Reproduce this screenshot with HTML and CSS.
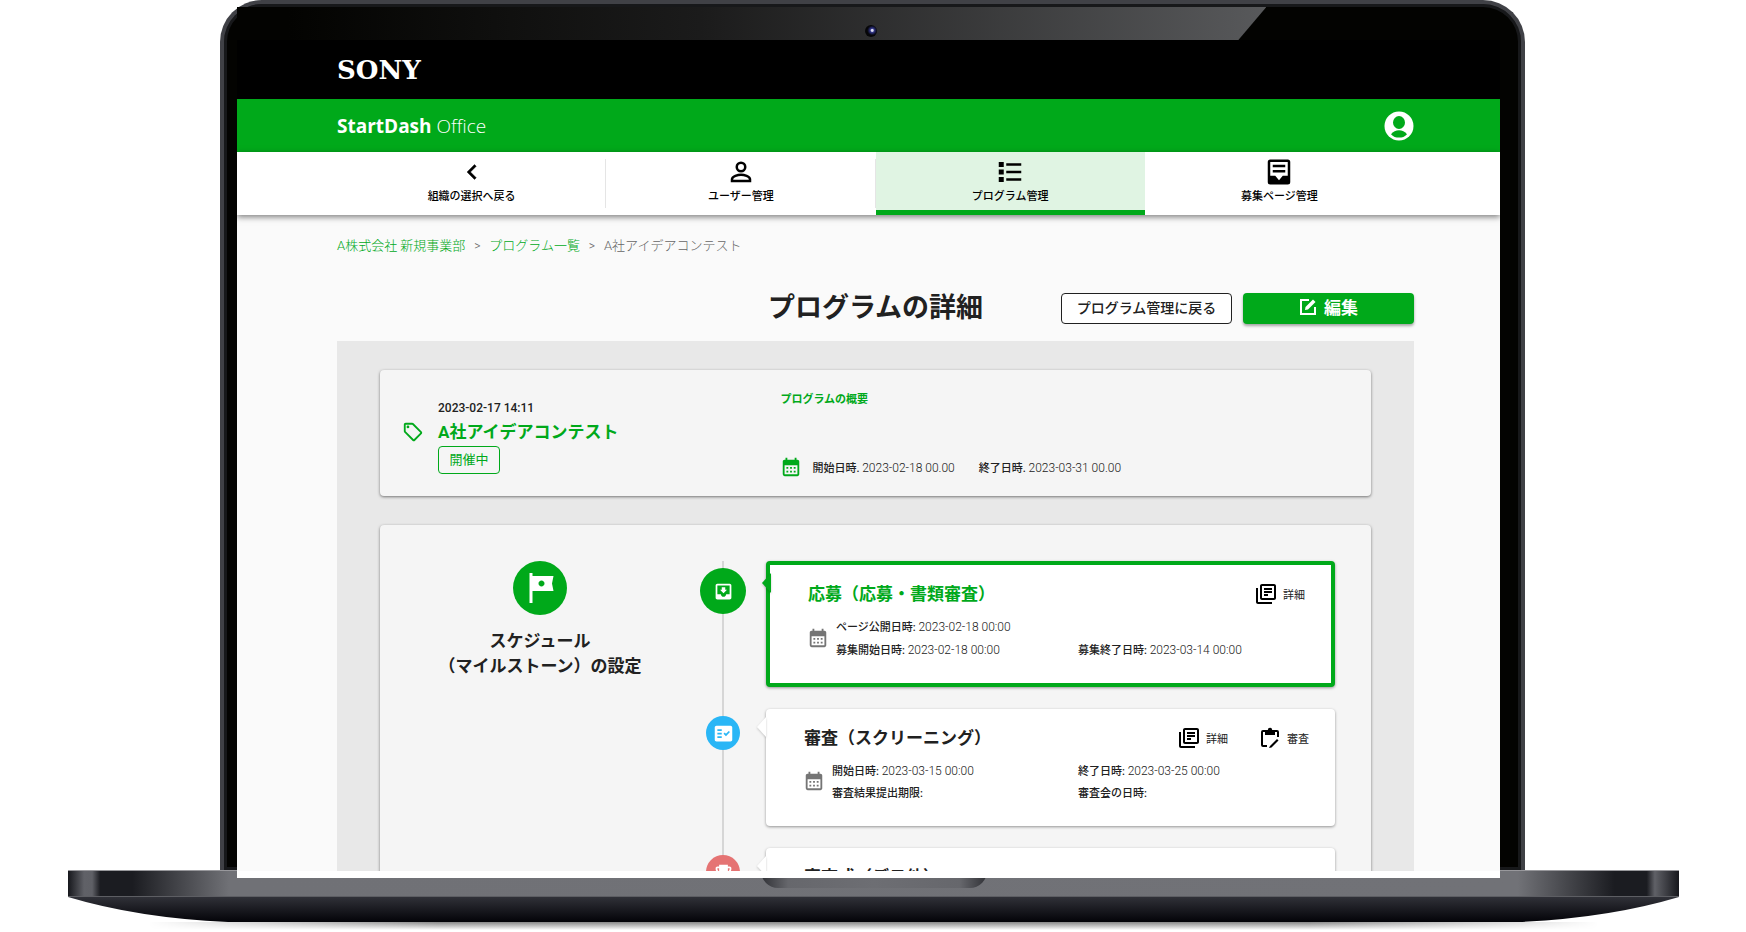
FILE: index.html
```html
<!DOCTYPE html>
<html lang="ja">
<head>
<meta charset="utf-8">
<meta name="viewport" content="width=device-width, initial-scale=1">
<title>プログラムの詳細</title>
<link rel="stylesheet" href="styles.css">
</head>
<body>
<svg class="defs" aria-hidden="true">
  <symbol id="i-books" viewBox="0 0 24 24"><path d="M4 6H2v14c0 1.1.9 2 2 2h14v-2H4V6zm16-4H8c-1.1 0-2 .9-2 2v12c0 1.1.9 2 2 2h12c1.1 0 2-.9 2-2V4c0-1.1-.9-2-2-2zm0 14H8V4h12v12zM10 9h8v2h-8zm0 3h4v2h-4zm0-6h8v2h-8z"/></symbol>
  <symbol id="i-cal" viewBox="0 0 24 24"><path d="M19 4h-1V2h-2v2H8V2H6v2H5c-1.11 0-1.99.9-1.99 2L3 20a2 2 0 0 0 2 2h14c1.1 0 2-.9 2-2V6c0-1.1-.9-2-2-2zm0 16H5V10h14v10zM9 14H7v-2h2v2zm4 0h-2v-2h2v2zm4 0h-2v-2h2v2zm-8 4H7v-2h2v2zm4 0h-2v-2h2v2zm4 0h-2v-2h2v2z"/></symbol>
</svg>
<div class="laptop">
  <div class="lid">
    <div class="bezel"><div class="sheen"></div><div class="camera"></div></div>
    <div class="screen">
      <div class="app">
        <div class="brand"><span class="sony">SONY</span></div>
        <header class="bar">
          <a class="product" href="#"><b>StartDash</b> Office</a>
          <button class="account" aria-label="アカウント">
            <svg viewBox="0 0 30 30"><circle cx="15" cy="15" r="14.5" fill="#fff"/><ellipse cx="15" cy="11.5" rx="6" ry="6.5" fill="#00a91a"/><path d="M7 23.2C9 20.4 12 19.2 15 19.2s6 1.200 8 4C21 25.700 18 26.600 15 26.600s-6-.9-8-3.400z" fill="#00a91a"/></svg>
          </button>
        </header>
        <nav class="tabs">
          <a class="tab" href="#"><svg viewBox="0 0 24 24"><path d="M15.410 7.410 14 6l-6 6 6 6 1.410-1.410L10.830 12z" stroke="#000" stroke-width=".3"/></svg><span>組織の選択へ戻る</span></a>
          <a class="tab" href="#"><svg viewBox="0 0 24 24"><g fill="none" stroke="#000" stroke-width="2"><circle cx="12" cy="8" r="3.400"/><path d="M4.800 19.200v-1.400c0-2.400 4.800-3.700 7.200-3.700s7.200 1.300 7.200 3.700v1.400z"/></g></svg><span>ユーザー管理</span></a>
          <a class="tab active" href="#" aria-current="page"><svg viewBox="0 0 24 24"><path d="M3 4h4v4H3zM3 10h4v4H3zM3 16h4v4H3zM9 5h12v2H9zM9 11h12v2H9zM9 17h12v2H9z"/></svg><span>プログラム管理</span></a>
          <a class="tab" href="#"><svg viewBox="0 0 24 24"><path fill-rule="evenodd" d="M5 2h14a2 2 0 0 1 2 2v16a2 2 0 0 1-2 2H5a2 2 0 0 1-2-2V4a2 2 0 0 1 2-2zm0 2v11h4l3 3.500 3-3.500h4V4zm2 2.200h10v1.900H7zm0 4.200h10v1.900H7z"/></svg><span>募集ページ管理</span></a>
        </nav>
        <main class="main">
          <div class="crumbs"><a href="#">A株式会社 新規事業部</a><i>&gt;</i><a href="#">プログラム一覧</a><i>&gt;</i><span>A社アイデアコンテスト</span></div>
          <div class="heading">
            <h1>プログラムの詳細</h1>
            <div class="heading-actions">
              <button class="btn">プログラム管理に戻る</button>
              <button class="btn primary"><svg viewBox="0 0 18 18"><path d="M10 2H2v14h14V9" fill="none" stroke="#fff" stroke-width="2"/><path d="m6 12 .5-3L14 1.500 16.500 4 9 11.500z" fill="#fff"/></svg>編集</button>
            </div>
          </div>
          <div class="panel">
            <section class="card summary">
              <div class="summary-id">
                <svg class="i22 green" viewBox="0 0 24 24"><path d="M21.410 11.410l-8.830-8.830c-.37-.37-.88-.58-1.410-.58H4c-1.100 0-2 .9-2 2v7.170c0 .53.21 1.040.59 1.410l8.830 8.830c.78.78 2.050.78 2.830 0l7.170-7.170c.78-.78.78-2.040-.01-2.830zM12.830 20L4 11.170V4h7.170L20 12.830 12.830 20z"/><circle cx="6.500" cy="6.500" r="1.500"/></svg>
                <div>
                  <time>2023-02-17 14:11</time>
                  <h2>A社アイデアコンテスト</h2>
                  <span class="chip">開催中</span>
                </div>
              </div>
              <div class="summary-info">
                <h3>プログラムの概要</h3>
                <div class="period"><svg class="i22 green"><use href="#i-cal"/></svg><span><b>開始日時.</b> <time>2023-02-18 00.00</time></span><span><b>終了日時.</b> <time>2023-03-31 00.00</time></span></div>
              </div>
            </section>
            <section class="card schedule">
              <div class="schedule-title">
                <div class="flag"><svg viewBox="0 0 24 24"><path d="M21 4H7V2H5v20h2v-8h14l-1-5 1-5zm-6 5c0 1.100-.9 2-2 2s-2-.9-2-2 .9-2 2-2 2 .9 2 2z"/></svg></div>
                <h2>スケジュール<br>（マイルストーン）の設定</h2>
              </div>
              <ol class="timeline">
                <li>
                  <div class="dot big"><svg viewBox="0 0 24 24"><path d="M19 3H4.990c-1.110 0-1.980.9-1.980 2L3 19c0 1.100.88 2 1.990 2H19c1.100 0 2-.9 2-2V5c0-1.100-.9-2-2-2zm0 12h-4c0 1.660-1.350 3-3 3s-3-1.340-3-3H4.990V5H19v10zm-3-5h-2V7h-4v3H8l4 4 4-4z"/></svg></div>
                  <article class="item current">
                    <div class="item-head"><h3>応募（応募・書類審査）</h3><button class="act"><svg><use href="#i-books"/></svg>詳細</button></div>
                    <div class="item-body">
                      <svg><use href="#i-cal"/></svg>
                      <p><b>ページ公開日時:</b> <time>2023-02-18 00:00</time></p><p></p>
                      <p><b>募集開始日時:</b> <time>2023-02-18 00:00</time></p><p><b>募集終了日時:</b> <time>2023-03-14 00:00</time></p>
                    </div>
                  </article>
                </li>
                <li>
                  <div class="dot blue"><svg viewBox="0 0 24 24"><path d="M20 3H4c-1.100 0-2 .9-2 2v14c0 1.100.9 2 2 2h16c1.100 0 2-.9 2-2V5c0-1.100-.9-2-2-2zM10 17H5v-2h5v2zm0-4H5v-2h5v2zm0-4H5V7h5v2zm4.820 6L12 12.160l1.410-1.410 1.410 1.420L17.990 9l1.420 1.420L14.820 15z"/></svg></div>
                  <article class="item">
                    <div class="item-head"><h3>審査（スクリーニング）</h3><button class="act"><svg><use href="#i-books"/></svg>詳細</button><button class="act"><svg viewBox="0 0 24 24"><path d="M9 21H5a2 2 0 0 1-2-2V6a2 2 0 0 1 2-2h14a2 2 0 0 1 2 2v5h-2V6h-2v3H7V6H5v13h4z"/><circle cx="12" cy="4" r="2.200"/><path d="m12 20 7-7 1.500 1.500-7 7-2.500.5z"/></svg>審査</button></div>
                    <div class="item-body">
                      <svg><use href="#i-cal"/></svg>
                      <p><b>開始日時:</b> <time>2023-03-15 00:00</time></p><p><b>終了日時:</b> <time>2023-03-25 00:00</time></p>
                      <p><b>審査結果提出期限:</b></p><p><b>審査会の日時:</b></p>
                    </div>
                  </article>
                </li>
                <li>
                  <div class="dot red"><svg viewBox="0 0 24 24"><path d="M19 5h-2V3H7v2H5c-1.100 0-2 .9-2 2v1c0 2.550 1.920 4.630 4.390 4.940.63 1.500 1.980 2.630 3.610 2.960V19H7v2h10v-2h-4v-3.100c1.630-.33 2.980-1.460 3.610-2.960C19.080 12.630 21 10.550 21 8V7c0-1.100-.9-2-2-2zM5 8V7h2v3.820C5.840 10.400 5 9.300 5 8zm14 0c0 1.300-.84 2.400-2 2.820V7h2v1z"/></svg></div>
                  <article class="item">
                    <div class="item-head"><h3>審査式（デモ他）</h3></div>
                  </article>
                </li>
              </ol>
            </section>
          </div>
        </main>
      </div>
    </div>
  </div>
  <div class="base">
    <div class="deck"><div class="notch"></div></div>
    <svg class="hull" viewBox="0 0 1611 25" preserveAspectRatio="none"><defs><linearGradient id="hull" x2="0" y2="1"><stop stop-color="#303138"/><stop offset="1" stop-color="#030308"/></linearGradient></defs><path fill="url(#hull)" d="M0 0Q70 21 160 25H1451Q1541 21 1611 0Z"/></svg>
    <div class="shadow"></div>
  </div>
</div>
</body>
</html>
```
FILE: styles.css
```css
* { box-sizing: border-box; }
body {
  margin: 0;
  background: #fff;
  color: #212121;
  font-family: Roboto, "Noto Sans CJK JP", sans-serif;
  font-size: 11px;
}
h1, h2, h3, p, ol { margin: 0; padding: 0; }
a { text-decoration: none; }
button { font: inherit; color: inherit; cursor: pointer; }
.defs { display: none; }
.green { fill: #00a91a; }
.i22 { width: 22px; height: 22px; flex: none; }

/* laptop */
.laptop { height: 100vh; display: flex; flex-direction: column; overflow: hidden; }
.lid {
  flex: 1;
  min-height: 0;
  display: flex;
  flex-direction: column;
  margin: 0 221px 0 220px;
  padding: 0 21px 0 13px;
  border: 4px solid #404146;
  border-bottom: 0;
  border-radius: 42px 42px 0 0;
  background: #030301;
  box-shadow: inset 0 0 0 3px #17181a;
  position: relative;
  z-index: 1;
}
.bezel { height: 36px; flex: none; position: relative; }
.sheen {
  height: 33px;
  margin: 3px 18.5% 0 0;
  background: linear-gradient(90deg, #030301 5%, #1b1b1b 45%, #58595b);
  clip-path: polygon(0 0, 100% 0, calc(100% - 28px) 100%, 0 100%);
}
.camera {
  position: absolute;
  left: calc(50% - 3px);
  top: 21px;
  width: 12px;
  height: 12px;
  margin-left: -1px;
  border-radius: 50%;
  background: radial-gradient(circle at 60% 45%, #dde 0 1px, #34388c 2px, #10122c 4px, #060608 5px);
}
.screen {
  flex: 1;
  min-height: 0;
  display: flex;
  margin-bottom: -8px;
  padding-bottom: 7px;
  background: #fff;
}
.app { flex: 1; overflow: hidden; background: #fafafa; }

.base { flex: none; height: 62px; margin: 0 67px 0 68px; }
.deck {
  height: 27px;
  border-top: 1px solid #98989c;
  border-bottom: 1px solid #5d5e63;
  background: linear-gradient(90deg, #16171c, #606167 1%, #5f6066 1.500%, #1b1c21 2%, #1b1c21 4%, #707176 10%, #717277 90%, #1b1c21 96%, #1b1c21 98%, #606167 98.500%, #16171c);
}
.notch {
  width: 226px;
  height: 17px;
  margin: 0 auto;
  border-radius: 0 0 18px 18px;
  background: linear-gradient(90deg, #303136, #66676c 12%, #6d6e73 50%, #66676c 88%, #303136);
}
.hull { display: block; width: 100%; height: 25px; }
.shadow {
  height: 8px;
  margin: 0 80px;
  background: linear-gradient(#888, #fff);
  -webkit-mask: linear-gradient(90deg, transparent, #000 20%, #000 80%, transparent);
  mask: linear-gradient(90deg, transparent, #000 20%, #000 80%, transparent);
}

/* header */
.brand, .bar, .tabs, .main { padding-left: 100px; padding-right: 86px; }
.brand { height: 59px; display: flex; align-items: center; background: #000; color: #fff; }
.sony { font: bold 26px "DejaVu Serif", serif; }
.bar {
  height: 53px;
  display: flex;
  align-items: center;
  justify-content: space-between;
  background: #00a91a;
}
.product { color: #fff; font: 300 19px "Open Sans", "Noto Sans", sans-serif; }
.product b { font-weight: 700; }
.account { padding: 0; border: 0; background: none; }
.account svg { display: block; width: 30px; height: 30px; }
.tabs {
  display: grid;
  grid-template-columns: repeat(4, 1fr);
  height: 63px;
  background: #fff;
  box-shadow: 0 2px 6px rgba(0, 0, 0, .5);
  position: relative;
}
.tab {
  display: flex;
  flex-direction: column;
  align-items: center;
  gap: 2px;
  padding-top: 5px;
  color: #000;
  font-weight: 500;
  line-height: 16px;
  background: linear-gradient(#e5e5e5, #e5e5e5) right 7px / 1px 49px no-repeat;
}
.tab:last-child { background: none; }
.tab svg { width: 30px; height: 30px; }
.tab.active { background: #e0f4e3; border-bottom: 5px solid #00a91a; }

/* page */
.main { padding-top: 21px; }
.crumbs { display: flex; font-size: 13px; line-height: 20px; font-weight: 300; color: #666; }
.crumbs a { color: #00a91a; }
.crumbs i { width: 24px; text-align: center; font-style: normal; font-size: 12px; }
.heading {
  display: grid;
  grid-template-columns: 1fr auto 1fr;
  align-items: center;
  padding: 32px 0 13px;
}
.heading h1 { grid-column: 2; font-size: 27px; line-height: 40px; font-weight: 700; }
.heading-actions { display: flex; justify-content: flex-end; gap: 11px; }
.btn {
  width: 171px;
  height: 31px;
  padding: 0 0 3px;
  border: 1px solid #212121;
  border-radius: 4px;
  background: #fff;
  font-size: 14px;
  font-weight: 500;
  white-space: nowrap;
}
.btn.primary {
  display: flex;
  align-items: center;
  justify-content: center;
  gap: 7px;
  border: 0;
  background: #00a91a;
  color: #fff;
  font-size: 17px;
  font-weight: 700;
  box-shadow: 0 2px 3px rgba(0, 0, 0, .35);
}
.btn svg { width: 18px; height: 18px; }
.panel {
  display: flex;
  flex-direction: column;
  gap: 29px;
  padding: 29px 43px;
  background: #e8e8e8;
}
.card { border-radius: 4px; background: #f5f5f5; box-shadow: 0 1px 3px rgba(0, 0, 0, .5); }
.summary { display: grid; grid-template-columns: 2fr 3fr; height: 126px; }
.summary-id { display: flex; align-items: center; gap: 14px; padding: 5px 0 0 22px; }
.summary-id svg { margin-bottom: 8px; }
.summary-id time { display: block; font-size: 12px; font-weight: 500; line-height: 20px; }
.summary-id h2 { color: #00a91a; font-size: 17px; line-height: 28px; }
.chip {
  display: block;
  width: 62px;
  height: 28px;
  border: 1px solid #00a91a;
  border-radius: 4px;
  color: #00a91a;
  font-size: 13px;
  line-height: 25px;
  text-align: center;
}
.summary-info { display: flex; flex-direction: column; justify-content: space-between; padding: 22px 0 18px 4px; }
.summary-info h3 { color: #00a91a; font-size: 11px; font-weight: 700; line-height: 16px; }
.period { display: flex; align-items: center; gap: 24px; }
.period svg { margin-right: -14px; }
.period time, .item-body time { font-size: 12px; font-weight: 300; }
b { font-weight: 500; }

.schedule { display: grid; grid-template-columns: 320px 1fr; padding: 36px 36px 36px 0; }
.schedule-title { text-align: center; }
.flag {
  display: grid;
  place-items: center;
  width: 54px;
  height: 54px;
  margin: 0 auto 14px;
  border-radius: 50%;
  background: #00a91a;
}
.flag svg { width: 36px; height: 36px; fill: #fff; }
.schedule-title h2 { font-size: 17px; font-weight: 700; line-height: 25px; }
.timeline {
  display: grid;
  gap: 22px;
  list-style: none;
  background: linear-gradient(#d6d6d6, #d6d6d6) 22px 0 / 2px 100% no-repeat;
}
.timeline li { display: grid; grid-template-columns: 46px 1fr; gap: 20px; }
.dot {
  display: grid;
  place-items: center;
  justify-self: center;
  width: 34px;
  height: 34px;
  margin-top: 7px;
  border-radius: 50%;
  background: #00a91a;
}
.dot.big { width: 46px; height: 46px; }
.dot.blue { background: #29b6f6; }
.dot.red { background: #e57373; }
.dot svg { width: 21px; height: 21px; fill: #fff; }
.item {
  min-height: 117px;
  padding: 13px 11px 12px 38px;
  border-radius: 4px;
  background: #fff;
  box-shadow: 0 1px 3px rgba(0, 0, 0, .4);
  position: relative;
}
.item::before {
  content: "";
  position: absolute;
  left: -9px;
  top: 8px;
  border: 10px solid transparent;
  border-right: 9px solid #fff;
  border-left: 0;
  filter: drop-shadow(0 1px 1px rgba(0, 0, 0, .2));
}
.item.current { border: 4px solid #00a91a; min-height: 126px; }
.item.current::before { border-right-color: #00a91a; left: -8px; }
.item-head { display: flex; align-items: center; gap: 30px; height: 32px; padding-right: 15px; }
.item-head h3 { flex: 1; font-size: 17px; font-weight: 700; line-height: 26px; }
.current h3 { color: #00a91a; }
.act {
  display: flex;
  align-items: center;
  gap: 5px;
  padding: 0;
  border: 0;
  background: none;
}
.act svg { width: 24px; height: 24px; }
.item-body {
  display: grid;
  grid-template-columns: 28px 1fr 1fr;
  padding-top: 6px;
  line-height: 22px;
}
.item-body svg { grid-row: 1 / 3; align-self: center; width: 22px; height: 22px; margin: 0 0 3px -1px; fill: #757575; }
```
